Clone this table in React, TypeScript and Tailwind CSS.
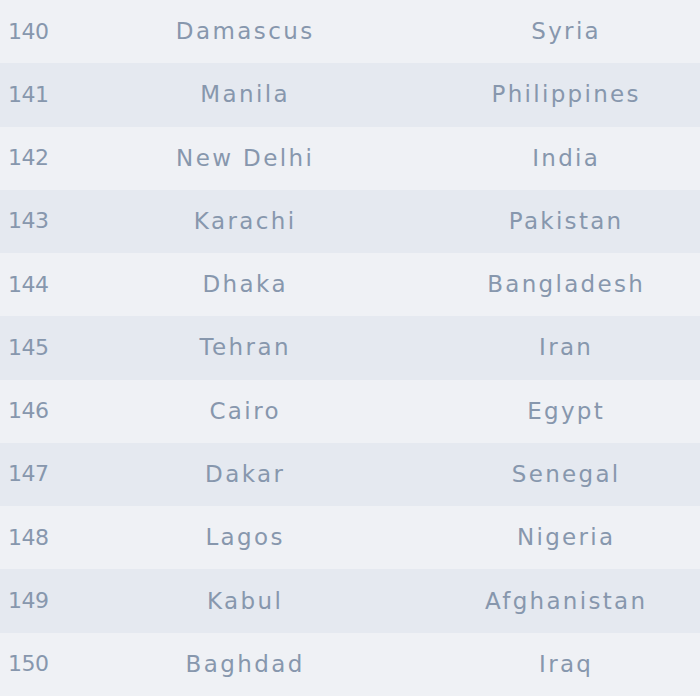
import React from "react";

const rows: [number, string, string][] = [
  [140, "Damascus", "Syria"],
  [141, "Manila", "Philippines"],
  [142, "New Delhi", "India"],
  [143, "Karachi", "Pakistan"],
  [144, "Dhaka", "Bangladesh"],
  [145, "Tehran", "Iran"],
  [146, "Cairo", "Egypt"],
  [147, "Dakar", "Senegal"],
  [148, "Lagos", "Nigeria"],
  [149, "Kabul", "Afghanistan"],
  [150, "Baghdad", "Iraq"],
];

export default function App() {
  return (
    <div
      className="w-[700px] h-[696px] bg-[#eff1f5] text-[#8797ad] leading-none"
      style={{ fontFamily: '"DejaVu Sans", "Open Sans", sans-serif' }}
    >
      {rows.map(([n, city, country], i) => (
        <div
          key={n}
          className={`flex items-center h-[63.27px] ${i % 2 === 1 ? "bg-[#e5e9f0]" : "bg-[#eff1f5]"}`}
        >
          <div className="w-[58px] pl-[8px] text-[22px] tracking-[-0.5px]">{n}</div>
          <div className="w-[372px] text-center text-[23px] tracking-[2.4px] pl-[2.4px]">{city}</div>
          <div className="w-[270px] text-center text-[23px] tracking-[2.3px] pl-[2.3px]">{country}</div>
        </div>
      ))}
    </div>
  );
}
